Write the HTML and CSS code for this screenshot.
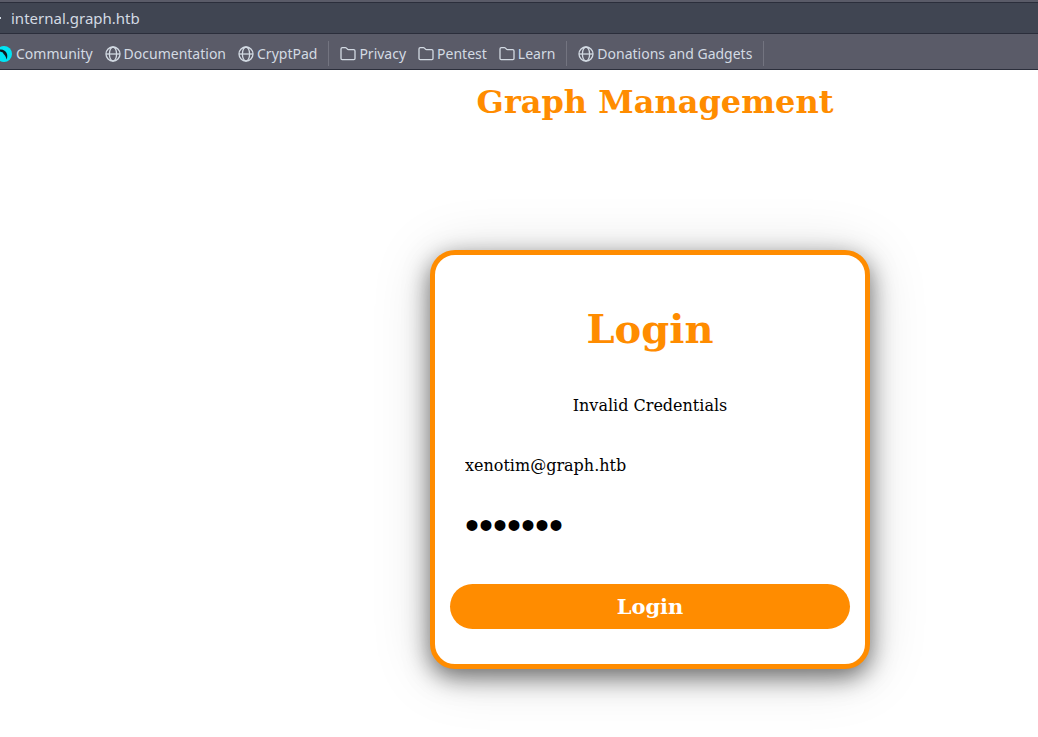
FILE: index.html
```html
<!DOCTYPE html>
<html lang="en">
<head>
<meta charset="utf-8">
<title>Graph Management</title>
<link rel="stylesheet" href="styles.css">
</head>
<body>
<svg class="symbols" aria-hidden="true">
  <symbol id="globe" viewBox="0 0 16 16">
    <circle cx="8" cy="8" r="7"/>
    <ellipse cx="8" cy="8" rx="3.6" ry="7"/>
    <path d="M1 8h14"/>
  </symbol>
  <symbol id="folder" viewBox="0 0 16 16">
    <path d="M1 12.6V3q0-1.400 1.400-1.400h3q.7 0 1.100.5l.9 1q.4.5 1.100.5h5.100q1.400 0 1.400 1.400v7.600q0 1.100-1.100 1.100H2.100q-1.100 0-1.100-1.100z"/>
  </symbol>
</svg>
<header class="browser">
  <div class="address">
    <span class="address-mark"></span>
    <input class="address-input" type="text" aria-label="Address" value="internal.graph.htb">
  </div>
  <nav class="bookmarks" aria-label="Bookmarks">
    <a class="bookmark" href="#"><svg class="logo" viewBox="0 0 12 16"><circle cx="4" cy="8" r="8" fill="#00e5f5"/><path d="M0 3.600C3 3.200 6 5 7 8c.5 1.800.3 3.600-.3 5.600C6 11 5 9.400 3.600 8L2.800 6.600 0 5.600z" fill="#101820"/></svg>Community</a>
    <a class="bookmark" href="#"><svg class="icon"><use href="#globe"/></svg>Documentation</a>
    <a class="bookmark" href="#"><svg class="icon"><use href="#globe"/></svg>CryptPad</a>
    <span class="divider"></span>
    <a class="bookmark" href="#"><svg class="icon"><use href="#folder"/></svg>Privacy</a>
    <a class="bookmark" href="#"><svg class="icon"><use href="#folder"/></svg>Pentest</a>
    <a class="bookmark" href="#"><svg class="icon"><use href="#folder"/></svg>Learn</a>
    <span class="divider"></span>
    <a class="bookmark" href="#"><svg class="icon"><use href="#globe"/></svg>Donations and Gadgets</a>
    <span class="divider"></span>
  </nav>
</header>
<main class="page">
  <h1 class="site-title">Graph Management</h1>
  <form class="card">
    <h2 class="card-title">Login</h2>
    <p class="message">Invalid Credentials</p>
    <input class="field" type="text" aria-label="Email" value="xenotim@graph.htb">
    <input class="field field-password" type="password" aria-label="Password" value="invalid">
    <button class="submit" type="button">Login</button>
  </form>
</main>
</body>
</html>
```
FILE: styles.css
```css
* {
  box-sizing: border-box;
}

body {
  margin: 0;
  background: #fff;
  color: #000;
  font: 16px/20px "DejaVu Serif", serif;
}

.symbols {
  position: absolute;
  width: 0;
  height: 0;
}

.browser {
  padding-top: 2px;
  background: #5a5b68;
  color: #d3dae3;
  font: 14px/20px "Noto Sans", sans-serif;
}

.address {
  display: flex;
  align-items: center;
  gap: 10px;
  height: 32px;
  border: solid #2b2e3b;
  border-width: 1px 0;
  background: #404552;
}

.address-mark {
  width: 1px;
  height: 2px;
  background: #d3dae3;
}

.address-input {
  flex: 1;
  padding: 0;
  border: 0;
  outline: 0;
  background: transparent;
  color: inherit;
  font: 15px/20px "Noto Sans", sans-serif;
}

.bookmarks {
  display: flex;
  align-items: center;
  gap: 12px;
  height: 36px;
  padding-top: 4px;
  border-bottom: 1px solid #2b2e3b;
  overflow: hidden;
}

.bookmark {
  display: flex;
  flex: none;
  align-items: center;
  gap: 3px;
  color: inherit;
  text-decoration: none;
}

.icon {
  width: 16px;
  height: 16px;
  fill: none;
  stroke: currentColor;
  stroke-width: 1.3;
}

.logo {
  width: 12px;
  height: 16px;
  margin-right: 1px;
}

.divider {
  width: 1px;
  height: 25px;
  margin: 0 -1px;
  background: #737480;
}

.page {
  display: flex;
  flex-direction: column;
  align-items: center;
  padding: 12px 0 68px 262px;
}

.site-title {
  margin: 0 0 128px;
  padding-left: 10px;
  color: #ff8c00;
  font-size: 32px;
  line-height: 40px;
}

.card {
  display: flex;
  flex-direction: column;
  width: 100%;
  max-width: 440px;
  padding: 50px 15px 35px;
  border: 5px solid #ff8c00;
  border-radius: 25px;
  background: #fff;
  box-shadow: 0 8px 24px rgba(0, 0, 0, 0.55), 0 5px 60px rgba(0, 0, 0, 0.15);
}

.card-title {
  margin: 0 0 43px;
  color: #ff8c00;
  font-size: 40px;
  line-height: 48px;
  text-align: center;
}

.message {
  margin: 0 0 24px;
  line-height: 20px;
  text-align: center;
}

.field {
  height: 50px;
  margin-bottom: 10px;
  padding: 0 15px;
  border: 0;
  outline: 0;
  background: transparent;
  color: inherit;
  font: inherit;
}

.field-password {
  margin-bottom: 34px;
  font: 40px/50px "Liberation Sans", sans-serif;
}

.submit {
  height: 45px;
  border: 0;
  border-radius: 25px;
  background: #ff8c00;
  color: #fff;
  font: bold 21px/24px "DejaVu Serif", serif;
}
```
